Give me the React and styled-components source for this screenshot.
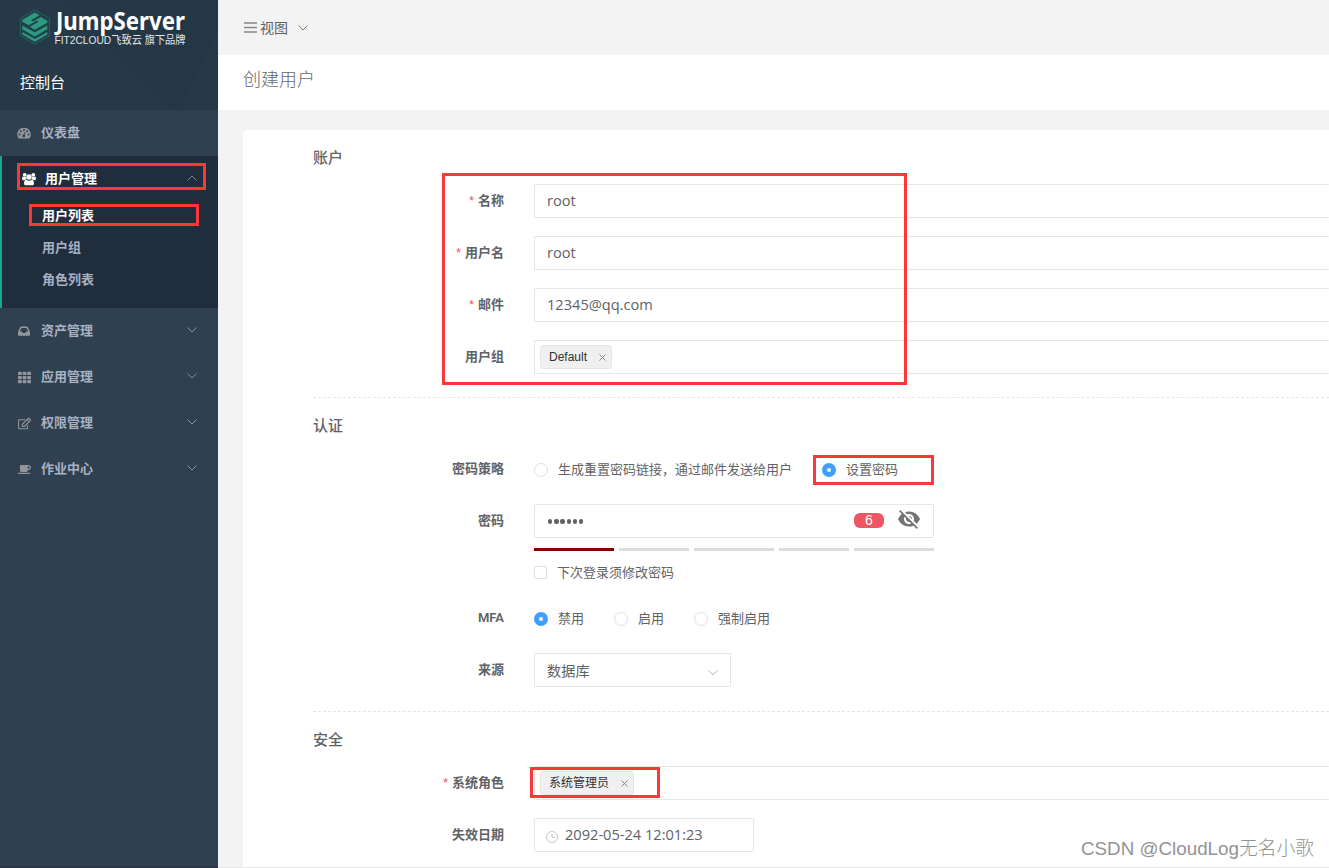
import React from 'react';
import styled, { createGlobalStyle, css } from 'styled-components';
import { FaTh, FaRegEdit, FaCoffee } from 'react-icons/fa';
import { MdVisibilityOff } from 'react-icons/md';

const GlobalStyle = createGlobalStyle`
  * { box-sizing: border-box; }
  body {
    margin: 0;
    overflow: hidden;
    background: #f3f3f3;
    color: #606266;
    font-family: 'Open Sans', 'Noto Sans CJK SC', sans-serif;
    font-size: 13px;
  }
`

const Page = styled.div`
  position: relative;
  display: flex;
  height: 868px;
  overflow: hidden;
`

const Sidebar = styled.aside`
  width: 218px;
  flex: none;
  border-bottom: 2px solid #2a3646;
  background: #2f4050;
`

const Brand = styled.div`
  height: 110px;
  padding: 9px 0 0 20px;
  background:
    linear-gradient(45deg, #263949 0 52%, transparent 52%),
    linear-gradient(115deg, #243747 0 86%, #263949 86%);
`

const LogoRow = styled.div`
  display: flex;
  height: 37px;
`

const Console = styled.div`
  margin-top: 26px;
  color: #fff;
  font-size: 15px;
  line-height: 20px;
`

const MenuItem = styled.div`
  display: flex;
  align-items: center;
  height: ${p => (p.$active ? 43 : 46)}px;
  padding: ${p => (p.$active ? '1px 21px 0 20px' : '0 21px 2px 17px')};
  color: ${p => (p.$active ? '#fff' : '#a7b1c2')};
  font-weight: 600;

  > span {
    flex: 1;
    margin-top: -1px;
    margin-left: ${p => (p.$active ? 9 : 10)}px;
  }
`

const MenuIcon = styled.i`
  display: flex;
  width: 14px;
  justify-content: center;
  margin-top: 2px;
  font-size: 13px;
  color: ${p => (p.$active ? '#fff' : '#929599')};
`

const SubMenu = styled.div`
  height: 152px;
  border-left: 2px solid #19aa8d;
  background: #202d3d;
`

const SubItem = styled.div`
  height: 32px;
  padding-left: 40px;
  line-height: 32px;
  font-weight: 600;
  color: ${p => (p.$active ? '#fff' : '#a7b1c2')};
`

const Main = styled.main`
  flex: 1;
  min-width: 0;
  display: flex;
  flex-direction: column;
`

const Navbar = styled.div`
  display: flex;
  flex: none;
  align-items: center;
  height: 55px;
  padding-left: 26px;
  font-size: 14px;

  > span {
    margin: -2px 10px 0 3px;
  }
`

const PageTitle = styled.div`
  flex: none;
  height: 55px;
  padding-left: 25px;
  background: #fff;
  color: #676a6c;
  font-size: 18px;
  font-weight: 300;
  line-height: 49px;
`

const Card = styled.div`
  flex: none;
  height: 760px;
  margin: 20px 0 0 25px;
  padding: 18px 0 0 70px;
  border-radius: 5px 0 0 0;
  background: #fff;
`

const Heading = styled.h3`
  height: 20px;
  margin: 0 0 16px;
  font-size: 15px;
  font-weight: 500;
  line-height: 19px;
`

const Divider = styled.div`
  margin: ${p => p.$top || 23}px 0 18px;
  border-top: 1px dashed #e4e7ea;
`

const Field = styled.div`
  display: flex;
  gap: 30px;

  & + & {
    margin-top: 18px;
  }
`

const Label = styled.label`
  width: 191px;
  flex: none;
  text-align: right;
  font-family: Roboto, 'Noto Sans CJK SC', sans-serif;
  font-weight: 600;
  line-height: 34px;

  ${p => p.$required && css`
    &::before {
      content: '*';
      margin-right: 4px;
      color: #ed5565;
      font-family: 'Liberation Sans', sans-serif;
      font-weight: 400;
    }
  `}
`

const Control = styled.div`
  display: flex;
  align-items: center;
  width: ${p => (p.$width ? `${p.$width}px` : 'auto')};
  flex: ${p => (p.$width ? 'none' : 1)};
  height: 34px;
  padding: 0 ${p => p.$right || 0}px 0 ${p => (p.$tags ? 5 : 12)}px;
  border: 1px solid #e5e6e7;
  border-right-width: ${p => (p.$width ? 1 : 0)}px;
  border-radius: 1px;
  background: #fff;
  font-size: 14.6px;

  > span {
    flex: 1;
    margin-top: -2px;
  }
`

const SelectText = styled.span`
  padding-top: 1px;
  font-size: 14.2px;
`

const SelectArrow = styled.i`
  display: flex;
  margin-top: 5px;
`

const Tag = styled.div`
  display: flex;
  align-items: center;
  justify-content: space-between;
  width: ${p => p.$width}px;
  height: 24px;
  padding: 0 5px 0 8px;
  border: 1px solid #e5e6e7;
  border-radius: 3px;
  background: #f0f0f0;
  color: #303133;
  font: 12px/20px 'Liberation Sans', 'Noto Sans CJK SC', sans-serif;
`

const Options = styled.div`
  display: flex;
  align-items: center;
  gap: 30px;
  height: 34px;
`

const Option = styled.div`
  display: flex;
  align-items: center;
  gap: 10px;
  line-height: 20px;
`

const Radio = styled.i`
  width: 14px;
  height: 14px;
  margin-top: 1px;
  border: ${p => (p.$checked ? '5px solid #409eff' : '1px solid #dcdfe6')};
  border-radius: 50%;
  background: #fff;
`

const Checkbox = styled.i`
  width: 13px;
  height: 13px;
  border: 1px solid #dcdfe6;
  border-radius: 2px;
`

const PasswordBlock = styled.div`
  height: 79px;
`

const Dots = styled.div`
  display: flex;
  flex: 1;
  gap: 1.8px;
  padding-left: 1px;
  margin-top: 1px;

  > i {
    width: 4.4px;
    height: 4.4px;
    border-radius: 50%;
    background: #606266;
  }
`

const Count = styled.div`
  width: 30px;
  height: 15px;
  margin: -1px 13px 0 0;
  border-radius: 6px;
  background: #ed5565;
  color: #fff;
  font: 14px/15px 'Liberation Sans', sans-serif;
  text-align: center;
`

const Eye = styled.i`
  display: flex;
  margin-top: -5px;
  color: #757575;
  font-size: 24px;
`

const Meter = styled.div`
  display: flex;
  gap: 5px;
  margin: 10px 0 11px;

  > i {
    width: 80px;
    height: 3px;
    background: #ddd;
  }
  > i:nth-child(even) { width: 70px; }
  > i:first-child { background: #8b0000; }
`

const ClockIcon = styled.svg`
  margin: 3px 7px 0 -1px;
`

/* red frames drawn on top of the form */
const Mark = styled.div`
  position: absolute;
  border: 3px solid #fc3737;
`

const MenuMark = styled(Mark)`left: 17px; top: 163px; width: 189px; height: 27px;`
const ListMark = styled(Mark)`left: 29px; top: 204px; width: 170px; height: 22px;`
const AccountMark = styled(Mark)`left: 442px; top: 173px; width: 465px; height: 212px;`
const PasswordMark = styled(Mark)`left: 813px; top: 455px; width: 121px; height: 30px;`
const RoleMark = styled(Mark)`left: 530px; top: 767px; width: 130px; height: 31px;`

const FooterLine = styled.div`
  position: absolute;
  left: 218px;
  right: 0;
  bottom: 0;
  border-top: 1px solid #e7e8ea;
`

const Watermark = styled.div`
  position: absolute;
  left: 1081px;
  top: 835px;
  color: #939393;
  font: 300 18.8px/28px 'Liberation Sans', 'Noto Sans CJK SC', sans-serif;
  white-space: nowrap;
`

const LogoSvg = styled.svg`
  overflow: visible;
`

const Chevron = ({ up, size = 10, color = '#8095a8' }) => (
  <svg width={size} height={size * 0.6} viewBox="0 0 10 6" fill="none" stroke={color}>
    <path d={up ? 'M.5 5.5 5 1l4.500 4.500' : 'M.5.5 5 5 9.500.5'} />
  </svg>
)

const Close = () => (
  <svg width="7" height="7" viewBox="0 0 7 7" stroke="#77797d" strokeWidth=".9">
    <path d="M.5.5l6 6M6.500.5l-6 6" />
  </svg>
)

const Gauge = () => (
  <svg width="14" height="12" viewBox="0 0 14 12">
    <path d="M7 .8a6.700 6.700 0 0 0-5.700 10.300c.1.200.3.300.5.300h10.400c.2 0 .4-.1.500-.3A6.700 6.700 0 0 0 7 .8z" fill="currentColor" />
    <g fill="#2f4050">
      <circle cx="2.500" cy="7.500" r=".95" />
      <circle cx="3.900" cy="4.300" r=".95" />
      <circle cx="7" cy="3" r=".95" />
      <circle cx="10.100" cy="4.300" r=".95" />
      <circle cx="11.500" cy="7.500" r=".95" />
      <circle cx="6.800" cy="8.900" r="1.400" />
    </g>
    <path d="M6.900 8.700 8 5" stroke="#2f4050" strokeWidth=".9" />
  </svg>
)

const Users = () => (
  <svg width="15" height="14" viewBox="0 0 15 14" fill="currentColor">
    <circle cx="2.900" cy="2.500" r="2" />
    <circle cx="12.100" cy="2.500" r="2" />
    <circle cx="7.500" cy="4.800" r="2.900" />
    <path d="M0 6.500C0 5.200.4 4.200 1.200 4.200c.9.800 2 .8 2.900.4 0 1 .3 2 .9 2.700-.9 0-1.700.3-2.300 1H1.500C.6 8.300 0 7.600 0 6.500zM15 6.500c0-1.300-.4-2.300-1.200-2.300-.9.800-2 .8-2.900.4 0 1-.3 2-.9 2.700.9 0 1.700.3 2.300 1h1.200c.9 0 1.500-.7 1.500-1.800z" />
    <path d="M4.600 7.700c-1.700.1-2.400 1.800-2.400 4 0 1.300.8 2.100 2 2.100h6.600c1.200 0 2-.8 2-2.100 0-2.200-.7-3.900-2.400-4-1.700 1.500-4.100 1.500-5.800 0z" />
  </svg>
)

const Inbox = () => (
  <svg width="12" height="10" viewBox="0 0 12 10">
    <path fill="currentColor" fillRule="evenodd" d="M2.300.9C2.400.6 2.700.4 3 .4h6c.3 0 .6.200.7.500L11.800 5.500c.1.300.2.600.2.900v2.800c0 .3-.2.500-.5.500H.5C.2 9.700 0 9.500 0 9.200V6.400c0-.3.100-.6.200-.9zM1.900 5.600H4l.7 1.500h2.600L8 5.600h2.100L8.500 1.900h-5z" />
  </svg>
)

const Logo = () => (
  <LogoSvg width="168" height="38" viewBox="0 0 168 38">
    <path d="M14.800.8 29.500 9.300v17.400L14.800 35.200.3 26.700V9.300z" fill="#223f4c" stroke="#24695f" strokeWidth=".8" />
    <g fill="#2d9a80">
      <path d="M2.300 11 14.800 3.600 19.500 6.300 11 11.300l2 1.200 7.800-4.500L27.300 11.700v2L14.800 20.700 9.800 17.800l8.800-5.100-1.800-1.100-7.900 4.600L2.300 12.700z" />
      <path d="M2.300 16.500 14.800 23.600 27.300 16.500v3.800L14.800 27.500 2.300 20.300z" />
      <path d="M2.300 22.900 14.800 30 27.300 22.900v2.600L14.800 32.800 2.300 25.500z" />
    </g>
    <text x="36" y="20.500" fill="#fff" fontFamily="Noto Sans, sans-serif" fontSize="24.500" fontWeight="700" textLength="129" lengthAdjust="spacingAndGlyphs">JumpServer</text>
    <text x="34.500" y="35" fill="#e2e6e9" fontFamily="Liberation Sans, Noto Sans CJK SC, sans-serif" fontSize="11.500" textLength="131" lengthAdjust="spacingAndGlyphs">FIT2CLOUD飞致云 旗下品牌</text>
  </LogoSvg>
)

const menus = [
  { name: '资产管理', icon: <Inbox /> },
  { name: '应用管理', icon: <FaTh /> },
  { name: '权限管理', icon: <FaRegEdit /> },
  { name: '作业中心', icon: <FaCoffee /> },
]

const TextField = ({ label, value }) => (
  <Field>
    <Label $required>{label}</Label>
    <Control><span>{value}</span></Control>
  </Field>
)

const App = () => {
  return (
    <Page>
      <GlobalStyle />
      <Sidebar>
        <Brand>
          <LogoRow><Logo /></LogoRow>
          <Console>控制台</Console>
        </Brand>
        <MenuItem>
          <MenuIcon><Gauge /></MenuIcon>
          <span>仪表盘</span>
        </MenuItem>
        <SubMenu>
          <MenuItem $active>
            <MenuIcon $active><Users /></MenuIcon>
            <span>用户管理</span>
            <Chevron up color="#72808d" />
          </MenuItem>
          <SubItem $active>用户列表</SubItem>
          <SubItem>用户组</SubItem>
          <SubItem>角色列表</SubItem>
        </SubMenu>
        {menus.map(m => (
          <MenuItem key={m.name}>
            <MenuIcon>{m.icon}</MenuIcon>
            <span>{m.name}</span>
            <Chevron />
          </MenuItem>
        ))}
      </Sidebar>

      <Main>
        <Navbar>
          <svg width="13" height="11" viewBox="0 0 13 11" stroke="#85878c" strokeWidth="1.500">
            <path d="M0 1h13M0 5.500h13M0 10h13" />
          </svg>
          <span>视图</span>
          <Chevron color="#76797e" />
        </Navbar>
        <PageTitle>创建用户</PageTitle>
        <Card>
          <Heading>账户</Heading>
          <TextField label="名称" value="root" />
          <TextField label="用户名" value="root" />
          <TextField label="邮件" value="12345@qq.com" />
          <Field>
            <Label>用户组</Label>
            <Control $tags><Tag $width={72}>Default<Close /></Tag></Control>
          </Field>

          <Divider />
          <Heading>认证</Heading>
          <Field>
            <Label>密码策略</Label>
            <Options>
              <Option><Radio />生成重置密码链接，通过邮件发送给用户</Option>
              <Option><Radio $checked />设置密码</Option>
            </Options>
          </Field>
          <Field>
            <Label>密码</Label>
            <PasswordBlock>
              <Control $width={400} $right={12}>
                <Dots><i /><i /><i /><i /><i /><i /></Dots>
                <Count>6</Count>
                <Eye><MdVisibilityOff /></Eye>
              </Control>
              <Meter><i /><i /><i /><i /><i /></Meter>
              <Option><Checkbox />下次登录须修改密码</Option>
            </PasswordBlock>
          </Field>
          <Field>
            <Label>MFA</Label>
            <Options>
              <Option><Radio $checked />禁用</Option>
              <Option><Radio />启用</Option>
              <Option><Radio />强制启用</Option>
            </Options>
          </Field>
          <Field>
            <Label>来源</Label>
            <Control $width={197} $right={12}>
              <SelectText>数据库</SelectText>
              <SelectArrow><Chevron color="#b4b8c0" /></SelectArrow>
            </Control>
          </Field>

          <Divider $top={24} />
          <Heading>安全</Heading>
          <Field>
            <Label $required>系统角色</Label>
            <Control $tags><Tag $width={94}>系统管理员<Close /></Tag></Control>
          </Field>
          <Field>
            <Label>失效日期</Label>
            <Control $width={220}>
              <ClockIcon width="12" height="12" viewBox="0 0 12 12" fill="none" stroke="#c0c4cc">
                <circle cx="6" cy="6" r="5.500" />
                <path d="M6 3v3.500h3" />
              </ClockIcon>
              <span>2092-05-24 12:01:23</span>
            </Control>
          </Field>
        </Card>
      </Main>

      <FooterLine />
      <MenuMark />
      <ListMark />
      <AccountMark />
      <PasswordMark />
      <RoleMark />
      <Watermark>CSDN @CloudLog无名小歌</Watermark>
    </Page>
  )
}
export default App;
